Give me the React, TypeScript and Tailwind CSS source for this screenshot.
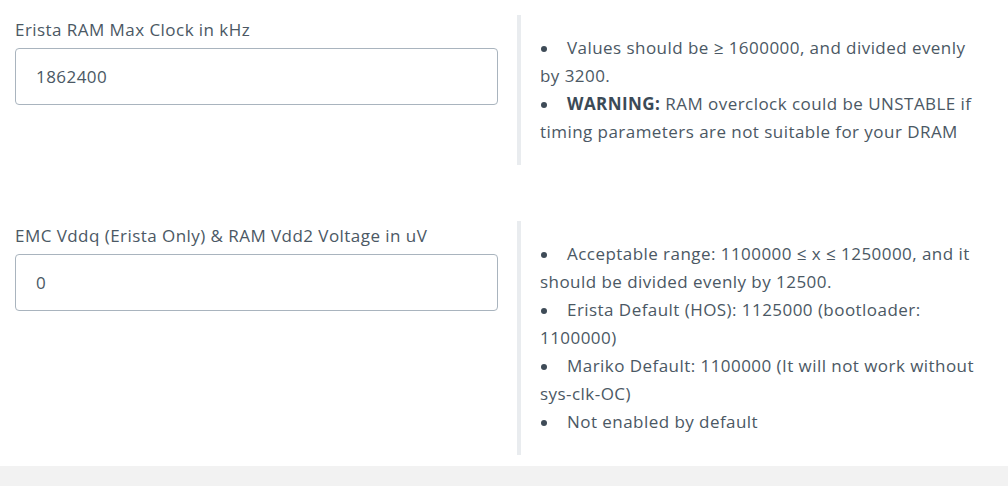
const font = { fontFamily: '"Open Sans", "Noto Sans", sans-serif' };

type Field = {
  label: string;
  value: string;
  notes: React.ReactNode[];
};

const fields: Field[] = [
  {
    label: 'Erista RAM Max Clock in kHz',
    value: '1862400',
    notes: [
      'Values should be ≥ 1600000, and divided evenly by 3200.',
      <>
        <b className="font-bold text-[#3b4a57]">WARNING:</b> RAM overclock could be UNSTABLE if timing parameters
        are not suitable for your DRAM
      </>,
    ],
  },
  {
    label: 'EMC Vddq (Erista Only) & RAM Vdd2 Voltage in uV',
    value: '0',
    notes: [
      'Acceptable range: 1100000 ≤ x ≤ 1250000, and it should be divided evenly by 12500.',
      'Erista Default (HOS): 1125000 (bootloader: 1100000)',
      'Mariko Default: 1100000 (It will not work without sys-clk-OC)',
      'Not enabled by default',
    ],
  },
];

function Row({ field }: { field: Field }) {
  return (
    <div className="flex">
      <div className="w-[502px] shrink-0 pl-[15px] pr-[4px]">
        <label className="block pt-[3px] text-[17px] leading-[24px] tracking-[0.45px] text-[#4b5864]">
          {field.label}
        </label>
        <input
          readOnly
          value={field.value}
          style={font}
          className="mt-[6px] block h-[57px] w-[483px] rounded-[4px] border border-[#a9b4be] bg-white px-[20px] text-[17px] tracking-[0.45px] text-[#4b5864] outline-none"
        />
      </div>
      <div className="ml-[15px] flex-1 border-l-[4px] border-[#e9ecef] py-[19px] pl-[19px] pr-[20px]">
        <ul className="text-[17px] leading-[28px] tracking-[0.45px] text-[#4b5864]">
          {field.notes.map((n, i) => (
            <li key={i}>
              <span className="inline-flex w-[27px] align-middle">
                <span className="ml-[1px] h-[6px] w-[6px] rounded-full bg-[#3e4b57]" />
              </span>
              {n}
            </li>
          ))}
        </ul>
      </div>
    </div>
  );
}

export default function App() {
  return (
    <div className="flex h-[486px] w-[1008px] flex-col bg-white" style={font}>
      <div className="flex flex-col gap-[56px] pt-[15px]">
        {fields.map((f) => (
          <Row key={f.label} field={f} />
        ))}
      </div>
      <div className="mt-[11px] flex-1 bg-[#f2f2f2]" />
    </div>
  );
}
